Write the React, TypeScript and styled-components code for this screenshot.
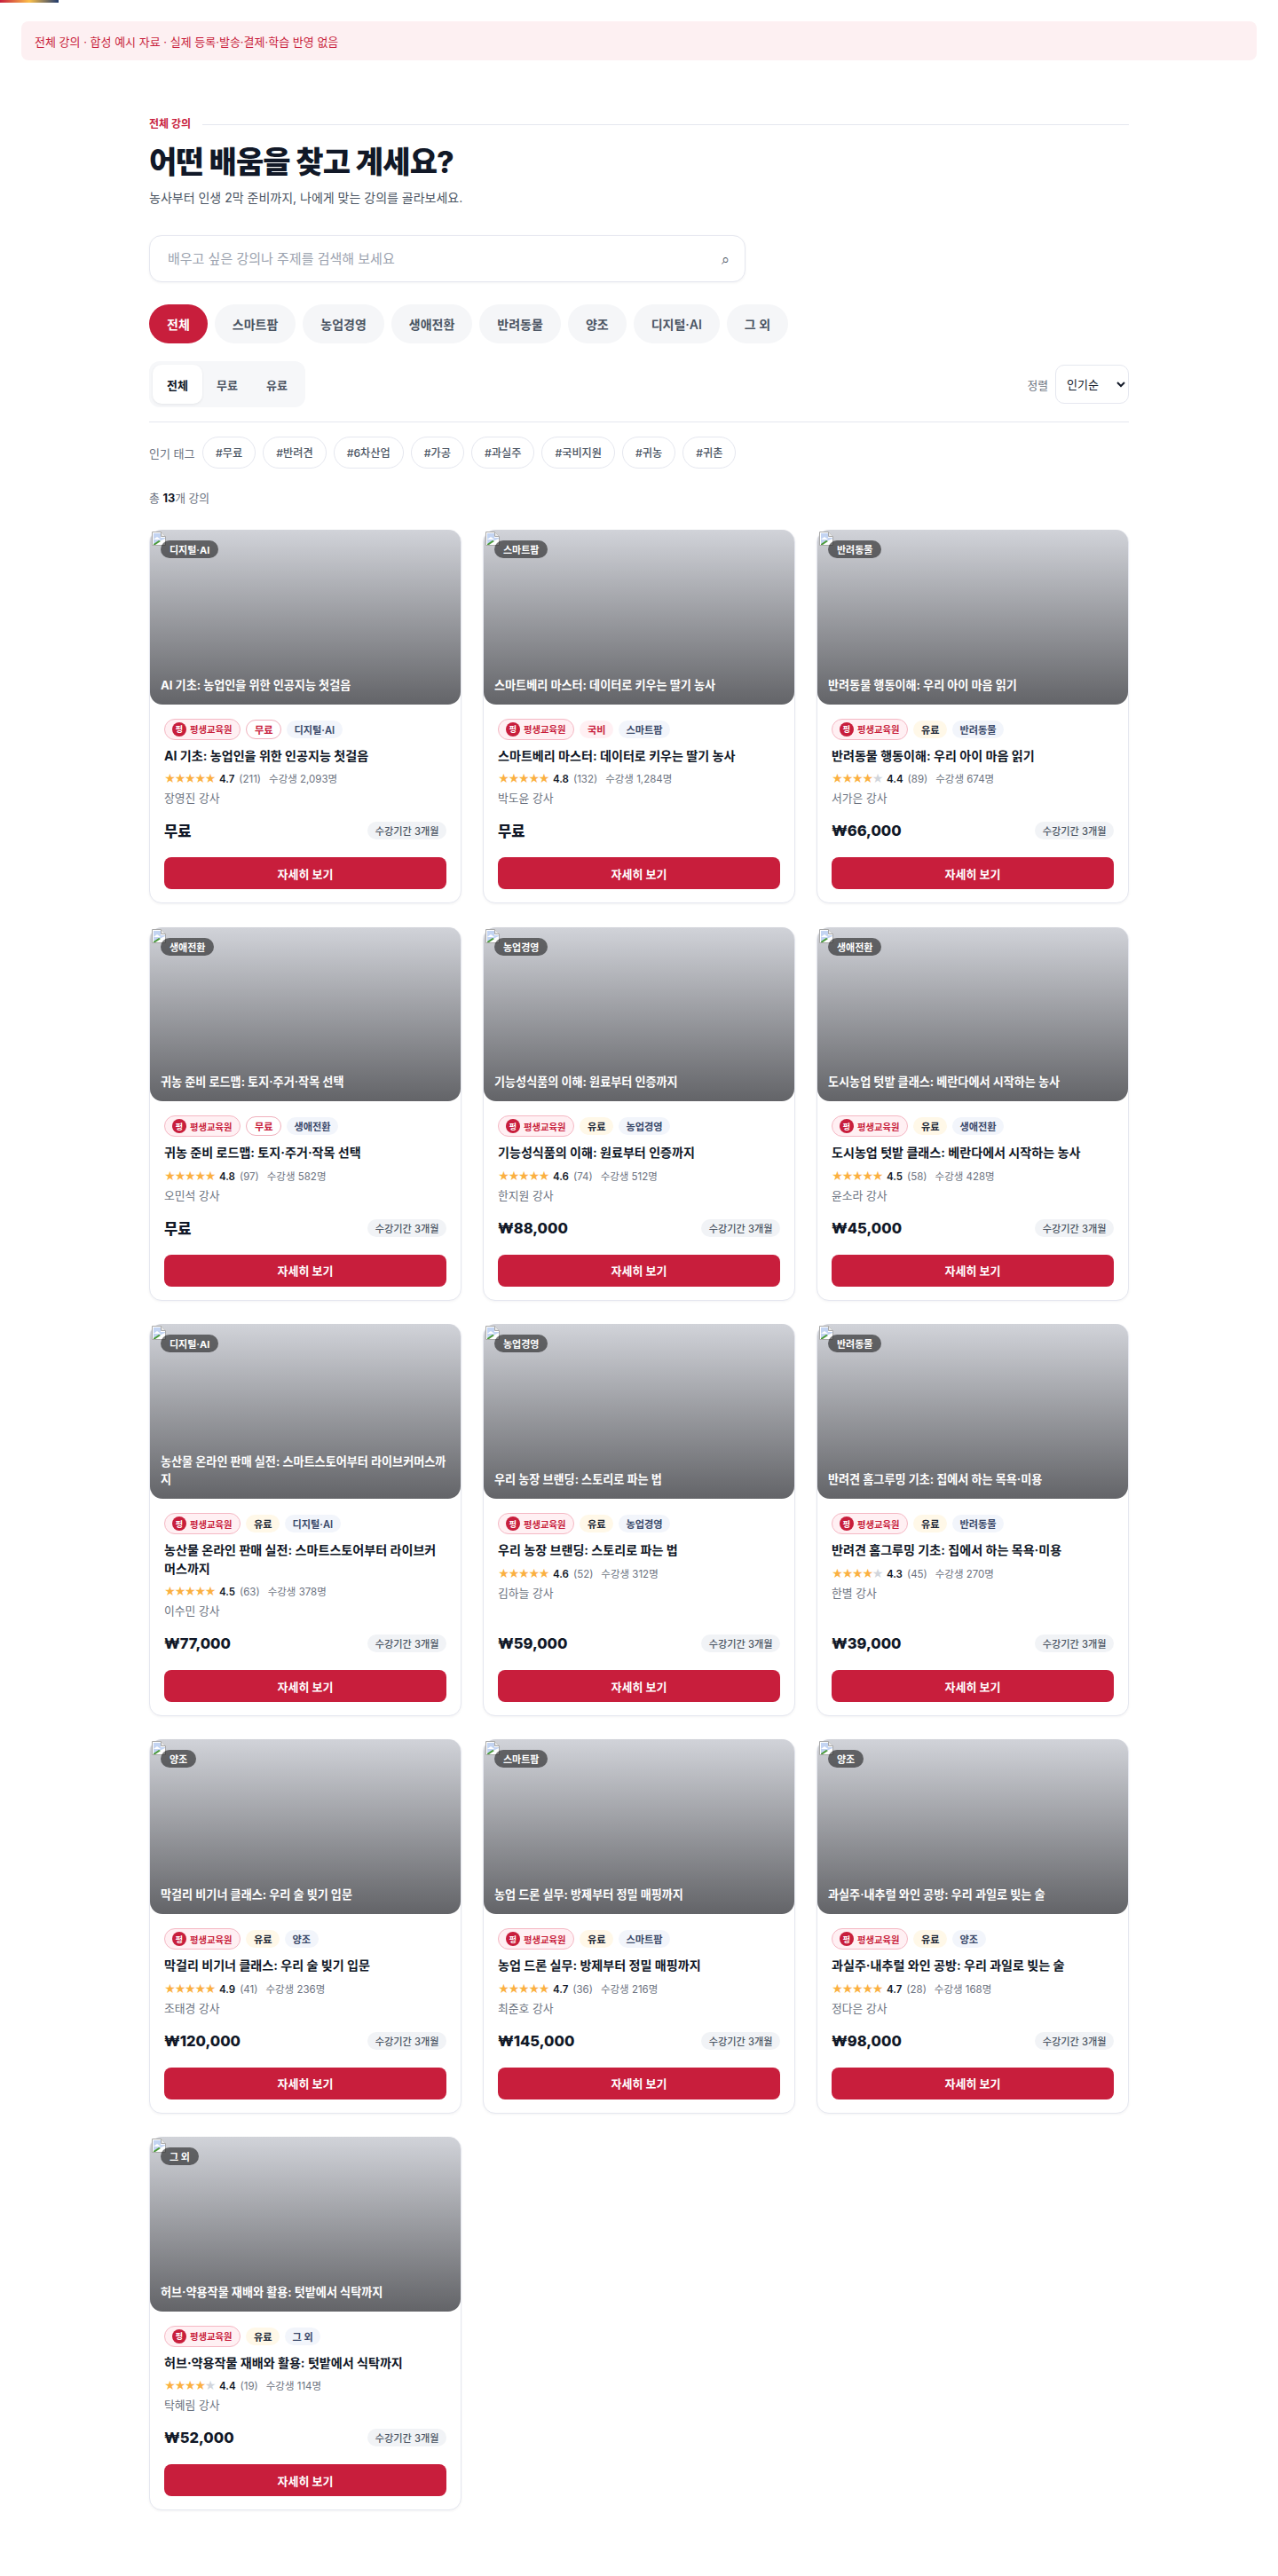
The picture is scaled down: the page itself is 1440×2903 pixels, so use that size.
import styled, { createGlobalStyle } from "styled-components";

const GlobalStyle = createGlobalStyle`
  * {
    box-sizing: border-box;
  }
  body {
    margin: 0;
    background: #ffffff;
    color: #111827;
    font-family: Inter, "Noto Sans CJK KR", sans-serif;
  }
`;

const ProgressBar = styled.div`
  position: absolute;
  top: 0;
  left: 0;
  width: 66px;
  height: 3px;
  background: linear-gradient(90deg, #c81e3c, #fbbf4a 50%, #1f3a6e);
`;

const Notice = styled.div`
  margin: 24px 24px 0;
  padding: 0 15px;
  height: 44px;
  display: flex;
  align-items: center;
  background: #fdf0f2;
  border-radius: 8px;
  color: #c81e3c;
  font-size: 13px;
`;

const Main = styled.main`
  width: 1104px;
  margin: 0 auto;
  padding: 64px 0 72px;
`;

const Eyebrow = styled.div`
  display: flex;
  align-items: center;
  gap: 13px;
  color: #c81e3c;
  font-size: 12px;
  font-weight: 700;
  line-height: 16px;

  &::after {
    content: "";
    flex: 1;
    height: 1px;
    background: #e5e7ef;
  }
`;

const Title = styled.h1`
  margin: 13px 0 0;
  font-size: 34px;
  line-height: 44px;
  font-weight: 800;
  letter-spacing: -0.85px;
  color: #111827;
`;

const Subtitle = styled.p`
  margin: 7px 0 0;
  font-size: 14px;
  line-height: 22px;
  color: #4b5563;
`;

const SearchBox = styled.div`
  display: flex;
  align-items: center;
  justify-content: space-between;
  width: 672px;
  height: 53px;
  margin-top: 31px;
  padding: 0 17px 0 20px;
  background: #fff;
  border: 1px solid #e5e7ef;
  border-radius: 14px;
  box-shadow: 0 1px 3px rgba(17, 24, 39, 0.05);
`;

const SearchInput = styled.input`
  flex: 1;
  padding: 0;
  border: 0;
  outline: none;
  background: transparent;
  font: inherit;
  font-size: 15px;
  color: #111827;

  &::placeholder {
    color: #9ca3af;
  }
`;

const SearchIcon = styled.span`
  font-size: 16px;
  color: #4b5563;
  line-height: 1;
`;

const CategoryRow = styled.div`
  display: flex;
  gap: 8px;
  margin-top: 25px;
`;

const CategoryPill = styled.button<{ $active?: boolean }>`
  height: 44px;
  padding: 0 20px;
  border: 0;
  border-radius: 999px;
  font: inherit;
  font-size: 14px;
  font-weight: 600;
  background: ${(p) => (p.$active ? "#c81e3c" : "#f5f6f8")};
  color: ${(p) => (p.$active ? "#fff" : "#4b5563")};
`;

const FilterRow = styled.div`
  display: flex;
  align-items: center;
  justify-content: space-between;
  margin-top: 20px;
  padding-bottom: 16px;
  border-bottom: 1px solid #e5e7ef;
`;

const PriceTabs = styled.div`
  display: flex;
  padding: 4px;
  background: #f6f7f9;
  border-radius: 12px;
`;

const PriceTab = styled.button<{ $active?: boolean }>`
  width: 56px;
  height: 44px;
  border: 0;
  border-radius: 10px;
  font: inherit;
  font-size: 13px;
  font-weight: 600;
  background: ${(p) => (p.$active ? "#fff" : "transparent")};
  color: ${(p) => (p.$active ? "#111827" : "#4b5563")};
  box-shadow: ${(p) => (p.$active ? "0 1px 3px rgba(17,24,39,.08)" : "none")};
`;

const SortBox = styled.label`
  display: flex;
  align-items: center;
  gap: 8px;
  font-size: 12.8px;
  color: #6b7280;
`;

const SortSelect = styled.select`
  width: 83px;
  height: 44px;
  padding: 0 8px;
  background: #fff;
  border: 1px solid #e5e7ef;
  border-radius: 10px;
  font: inherit;
  font-size: 13px;
  color: #111827;
`;

const TagRow = styled.div`
  display: flex;
  align-items: center;
  gap: 8px;
  margin-top: 16px;
`;

const TagLabel = styled.span`
  width: 52px;
  font-size: 13px;
  color: #6b7280;
`;

const Tag = styled.button`
  height: 36px;
  padding: 0 14px;
  background: #fff;
  border: 1px solid #e5e7ef;
  border-radius: 999px;
  font: inherit;
  font-size: 12.2px;
  font-weight: 500;
  color: #4b5563;
`;

const Count = styled.p`
  margin: 24px 0 0;
  font-size: 12.8px;
  line-height: 20px;
  color: #6b7280;

  strong {
    color: #111827;
    font-weight: 700;
  }
`;

const Grid = styled.div`
  display: grid;
  grid-template-columns: repeat(3, 1fr);
  gap: 26.2px 24px;
  margin-top: 25px;
`;

const Card = styled.article`
  display: flex;
  flex-direction: column;
  background: #fff;
  border: 1px solid #e5e7ef;
  border-radius: 14px;
  box-shadow: 0 1px 3px rgba(17, 24, 39, 0.05);
`;

const Thumb = styled.div`
  position: relative;
  display: flex;
  align-items: flex-end;
  aspect-ratio: 16 / 9;
  margin-top: -1px;
  padding: 12px;
  border-radius: 14px;
  background: linear-gradient(180deg, #d1d3d9 0%, #636468 100%);
`;

const BrokenImage = styled.svg`
  position: absolute;
  top: 2px;
  left: 2px;
`;

const ThumbBadge = styled.span`
  position: absolute;
  top: 12px;
  left: 12px;
  height: 20px;
  padding: 0 10px;
  display: flex;
  align-items: center;
  background: rgba(0, 0, 0, 0.52);
  border-radius: 999px;
  color: #fff;
  font-size: 11px;
  font-weight: 700;
`;

const ThumbTitle = styled.div`
  color: #fff;
  font-size: 13.12px;
  font-weight: 700;
  line-height: 20px;
`;

const Body = styled.div`
  flex: 1;
  display: flex;
  flex-direction: column;
  padding: 16px 16px 15px;
`;

const ChipRow = styled.div`
  display: flex;
  align-items: center;
  gap: 6px;
`;

const OrgChip = styled.span`
  display: flex;
  align-items: center;
  gap: 4px;
  height: 24px;
  padding: 0 9px 0 8px;
  background: #fff0f3;
  border: 1px solid #f5b8c4;
  border-radius: 999px;
  color: #c81e3c;
  font-size: 10.3px;
  font-weight: 700;
`;

const OrgMark = styled.span`
  display: flex;
  align-items: center;
  justify-content: center;
  width: 16px;
  height: 16px;
  background: #c81e3c;
  border-radius: 50%;
  color: #fff;
  font-size: 9px;
  font-weight: 700;
`;

const chipColors = {
  free: "background:#fff;border:1px solid #f0b0bc;color:#c81e3c;height:22px;",
  gov: "background:#fff0f3;color:#c81e3c;height:20px;",
  paid: "background:#fff8e8;color:#1f2937;height:20px;",
  cat: "background:#f2f5fb;color:#3b4a6b;height:20px;",
};

const Chip = styled.span<{ $kind: keyof typeof chipColors }>`
  display: flex;
  align-items: center;
  padding: 0 8.5px;
  border-radius: 999px;
  font-size: 11.2px;
  font-weight: 600;
  ${(p) => chipColors[p.$kind]}
`;

const CourseTitle = styled.h3`
  margin: 8px 0 0;
  font-size: 14.08px;
  font-weight: 700;
  line-height: 20.5px;
  color: #111827;
`;

const RatingRow = styled.div`
  display: flex;
  align-items: center;
  gap: 5px;
  margin-top: 7px;
  font-size: 11.5px;
  line-height: 18px;
  color: #6b7280;
`;

const Stars = styled.span`
  display: flex;
`;

const Star = styled.span<{ $on: boolean }>`
  width: 11.4px;
  text-align: center;
  font-size: 12.5px;
  color: ${(p) => (p.$on ? "#fbb040" : "#d1d5db")};
`;

const Score = styled.strong`
  color: #111827;
  font-weight: 600;
`;

const Learners = styled.span`
  margin-left: 4px;
`;

const Instructor = styled.div`
  margin-top: 3px;
  font-size: 12.8px;
  line-height: 20px;
  color: #6b7280;
`;

const PriceRow = styled.div`
  display: flex;
  align-items: center;
  justify-content: space-between;
  height: 38px;
  margin-top: auto;
  padding-top: 14px;
`;

const Price = styled.span`
  font-size: 16.5px;
  font-weight: 800;
  color: #111827;
`;

const Duration = styled.span`
  display: flex;
  align-items: center;
  height: 20px;
  padding: 0 8.5px;
  background: #f1f3f6;
  border-radius: 999px;
  font-size: 11.2px;
  font-weight: 500;
  color: #4b5563;
`;

const DetailButton = styled.button`
  width: 100%;
  height: 36px;
  margin-top: 18px;
  background: #c81e3c;
  border: 0;
  border-radius: 8px;
  color: #fff;
  font: inherit;
  font-size: 13px;
  font-weight: 700;
`;

type Course = {
  title: string;
  category: string;
  access: "free" | "gov" | "paid";
  rating: number;
  reviews: number;
  learners: string;
  teacher: string;
  price: string;
  noDuration?: boolean;
};

const categories = ["전체", "스마트팜", "농업경영", "생애전환", "반려동물", "양조", "디지털·AI", "그 외"];
const tags = ["#무료", "#반려견", "#6차산업", "#가공", "#과실주", "#국비지원", "#귀농", "#귀촌"];
const accessLabel = { free: "무료", gov: "국비", paid: "유료" };

const courses: Course[] = [
  { title: "AI 기초: 농업인을 위한 인공지능 첫걸음", category: "디지털·AI", access: "free", rating: 4.7, reviews: 211, learners: "2,093", teacher: "장영진", price: "무료" },
  { title: "스마트베리 마스터: 데이터로 키우는 딸기 농사", category: "스마트팜", access: "gov", rating: 4.8, reviews: 132, learners: "1,284", teacher: "박도윤", price: "무료", noDuration: true },
  { title: "반려동물 행동이해: 우리 아이 마음 읽기", category: "반려동물", access: "paid", rating: 4.4, reviews: 89, learners: "674", teacher: "서가은", price: "₩66,000" },
  { title: "귀농 준비 로드맵: 토지·주거·작목 선택", category: "생애전환", access: "free", rating: 4.8, reviews: 97, learners: "582", teacher: "오민석", price: "무료" },
  { title: "기능성식품의 이해: 원료부터 인증까지", category: "농업경영", access: "paid", rating: 4.6, reviews: 74, learners: "512", teacher: "한지원", price: "₩88,000" },
  { title: "도시농업 텃밭 클래스: 베란다에서 시작하는 농사", category: "생애전환", access: "paid", rating: 4.5, reviews: 58, learners: "428", teacher: "윤소라", price: "₩45,000" },
  { title: "농산물 온라인 판매 실전: 스마트스토어부터 라이브커머스까지", category: "디지털·AI", access: "paid", rating: 4.5, reviews: 63, learners: "378", teacher: "이수민", price: "₩77,000" },
  { title: "우리 농장 브랜딩: 스토리로 파는 법", category: "농업경영", access: "paid", rating: 4.6, reviews: 52, learners: "312", teacher: "김하늘", price: "₩59,000" },
  { title: "반려견 홈그루밍 기초: 집에서 하는 목욕·미용", category: "반려동물", access: "paid", rating: 4.3, reviews: 45, learners: "270", teacher: "한별", price: "₩39,000" },
  { title: "막걸리 비기너 클래스: 우리 술 빚기 입문", category: "양조", access: "paid", rating: 4.9, reviews: 41, learners: "236", teacher: "조태경", price: "₩120,000" },
  { title: "농업 드론 실무: 방제부터 정밀 매핑까지", category: "스마트팜", access: "paid", rating: 4.7, reviews: 36, learners: "216", teacher: "최준호", price: "₩145,000" },
  { title: "과실주·내추럴 와인 공방: 우리 과일로 빚는 술", category: "양조", access: "paid", rating: 4.7, reviews: 28, learners: "168", teacher: "정다은", price: "₩98,000" },
  { title: "허브·약용작물 재배와 활용: 텃밭에서 식탁까지", category: "그 외", access: "paid", rating: 4.4, reviews: 19, learners: "114", teacher: "탁혜림", price: "₩52,000" },
];

function BrokenIcon() {
  return (
    <BrokenImage width="16" height="16" viewBox="0 0 16 16">
      <path d="M.5.5h10l5 5v10H.5z" fill="#fff" stroke="#a8a8a8" />
      <path d="M10.5.5v5h5" fill="#e8e8e8" stroke="#a8a8a8" />
      <path d="M2 2h8v5l5 0v1L2 14z" fill="#c3d4f2" />
      <path d="M2 9l4-3 4 3z" fill="#fff" />
      <path d="M2 14l6-4 2 1-6 4H2z" fill="#4a9a3a" />
    </BrokenImage>
  );
}

function CourseCard({ course }: { course: Course }) {
  const filled = Math.round(course.rating);
  return (
    <Card>
      <Thumb>
        <BrokenIcon />
        <ThumbBadge>{course.category}</ThumbBadge>
        <ThumbTitle>{course.title}</ThumbTitle>
      </Thumb>
      <Body>
        <ChipRow>
          <OrgChip>
            <OrgMark>평</OrgMark>
            평생교육원
          </OrgChip>
          <Chip $kind={course.access}>{accessLabel[course.access]}</Chip>
          <Chip $kind="cat">{course.category}</Chip>
        </ChipRow>
        <CourseTitle>{course.title}</CourseTitle>
        <RatingRow>
          <Stars>
            {[1, 2, 3, 4, 5].map((n) => (
              <Star key={n} $on={n <= filled}>★</Star>
            ))}
          </Stars>
          <Score>{course.rating}</Score>
          <span>({course.reviews})</span>
          <Learners>수강생 {course.learners}명</Learners>
        </RatingRow>
        <Instructor>{course.teacher} 강사</Instructor>
        <PriceRow>
          <Price>{course.price}</Price>
          {course.noDuration ? null : <Duration>수강기간 3개월</Duration>}
        </PriceRow>
        <DetailButton>자세히 보기</DetailButton>
      </Body>
    </Card>
  );
}

export default function App() {
  return (
    <>
      <GlobalStyle />
      <ProgressBar />
      <Notice>전체 강의 · 합성 예시 자료 · 실제 등록·발송·결제·학습 반영 없음</Notice>
      <Main>
        <Eyebrow>전체 강의</Eyebrow>
        <Title>어떤 배움을 찾고 계세요?</Title>
        <Subtitle>농사부터 인생 2막 준비까지, 나에게 맞는 강의를 골라보세요.</Subtitle>
        <SearchBox>
          <SearchInput placeholder="배우고 싶은 강의나 주제를 검색해 보세요" />
          <SearchIcon>⌕</SearchIcon>
        </SearchBox>
        <CategoryRow>
          {categories.map((c, i) => (
            <CategoryPill key={c} $active={i === 0}>{c}</CategoryPill>
          ))}
        </CategoryRow>
        <FilterRow>
          <PriceTabs>
            <PriceTab $active>전체</PriceTab>
            <PriceTab>무료</PriceTab>
            <PriceTab>유료</PriceTab>
          </PriceTabs>
          <SortBox>
            정렬
            <SortSelect defaultValue="popular">
              <option value="popular">인기순</option>
            </SortSelect>
          </SortBox>
        </FilterRow>
        <TagRow>
          <TagLabel>인기 태그</TagLabel>
          {tags.map((t) => (
            <Tag key={t}>{t}</Tag>
          ))}
        </TagRow>
        <Count>총 <strong>13</strong>개 강의</Count>
        <Grid>
          {courses.map((c) => (
            <CourseCard key={c.title} course={c} />
          ))}
        </Grid>
      </Main>
    </>
  );
}
